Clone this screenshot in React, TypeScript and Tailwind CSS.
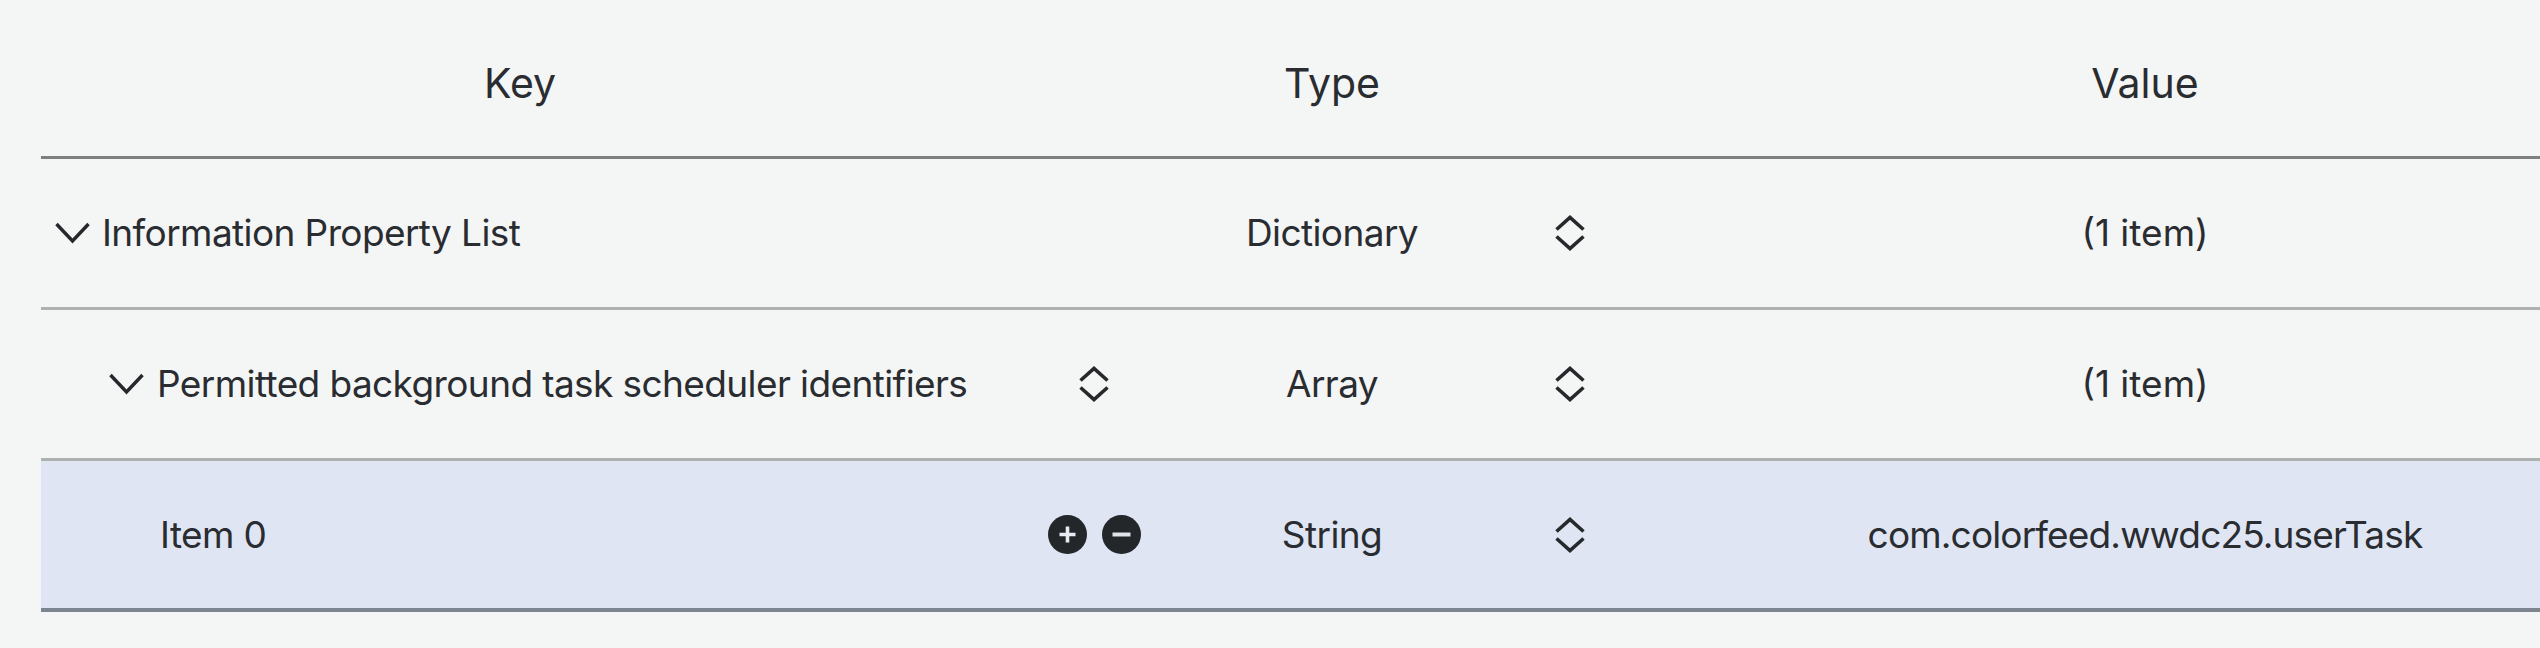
import React from "react";

const gridCols = "grid grid-cols-[999px_108px_368px_108px_1042px] items-center";

const UpDown = () => (
  <svg width="32" height="36" viewBox="0 0 32 36" fill="none" stroke="#26292c" strokeWidth="3.6" className="mx-auto block">
    <path d="M2.5 14.5 16 2.5 29.5 14.5" />
    <path d="M2.5 21.5 16 33.5 29.5 21.5" />
  </svg>
);

const Disclosure = () => (
  <svg width="35" height="22" viewBox="0 0 35 22" fill="none" stroke="#26292c" strokeWidth="3.4" className="shrink-0">
    <path d="M1.5 2 17.5 19 33.5 2" />
  </svg>
);

const PlusMinus = () => (
  <div className="flex items-center justify-center gap-[15px]">
    <svg width="39" height="39" viewBox="0 0 39 39" className="block">
      <circle cx="19.5" cy="19.5" r="19.5" fill="#23272a" />
      <path d="M19.5 11.5v16M11.5 19.5h16" stroke="#e8ebf2" strokeWidth="3.6" />
    </svg>
    <svg width="39" height="39" viewBox="0 0 39 39" className="block">
      <circle cx="19.5" cy="19.5" r="19.5" fill="#23272a" />
      <path d="M10.5 19.5h18" stroke="#dfe3ea" strokeWidth="4" />
    </svg>
  </div>
);

interface RowProps {
  label: string;
  type: string;
  value: string;
  valueTracking: string;
  indent: string;
  expandable?: boolean;
  selected?: boolean;
  keyStepper?: boolean;
  border: string;
}

const Row = ({ label, type, value, valueTracking, indent, expandable, selected, keyStepper, border }: RowProps) => (
  <div className={`${gridCols} h-[151px] ${border} ${selected ? "bg-[#dfe5f3]" : ""}`}>
    <div className={`flex items-center ${indent}`}>
      {expandable && <Disclosure />}
      <span>{label}</span>
    </div>
    <div>
      {keyStepper && <UpDown />}
      {selected && <PlusMinus />}
    </div>
    <div className="text-center">{type}</div>
    <div>
      <UpDown />
    </div>
    <div className={`text-center ${valueTracking}`}>{value}</div>
  </div>
);

export default function App() {
  return (
    <div className="w-[2540px] h-[648px] overflow-hidden bg-[#f4f5f5] text-[#292c30] text-[37px] tracking-[-0.6px] font-['Inter','Liberation_Sans',sans-serif]">
      <div className="ml-[41px] w-[2625px]">
        {/* header */}
        <div className={`${gridCols} h-[159px] pt-[12px] border-b-[3px] border-[#7d7f81] text-[41px] tracking-normal`}>
          <div className="pr-[41px] text-center">Key</div>
          <div className="col-start-3 text-center">Type</div>
          <div className="col-start-5 text-center">Value</div>
        </div>
        <Row
          label="Information Property List"
          type="Dictionary"
          value="(1 item)"
          valueTracking="tracking-normal"
          indent="pl-[14px] gap-[12px]"
          expandable
          border="border-b-[3px] border-[#aeb0b2]"
        />
        <Row
          label="Permitted background task scheduler identifiers"
          type="Array"
          value="(1 item)"
          valueTracking="tracking-normal"
          indent="pl-[68px] gap-[13px]"
          expandable
          keyStepper
          border="border-b-[3px] border-[#aeb0b2]"
        />
        <Row
          label="Item 0"
          type="String"
          value="com.colorfeed.wwdc25.userTask"
          valueTracking="tracking-[-0.85px]"
          indent="pl-[119px]"
          selected
          border="border-b-[4px] border-[#7d8690]"
        />
      </div>
    </div>
  );
}
